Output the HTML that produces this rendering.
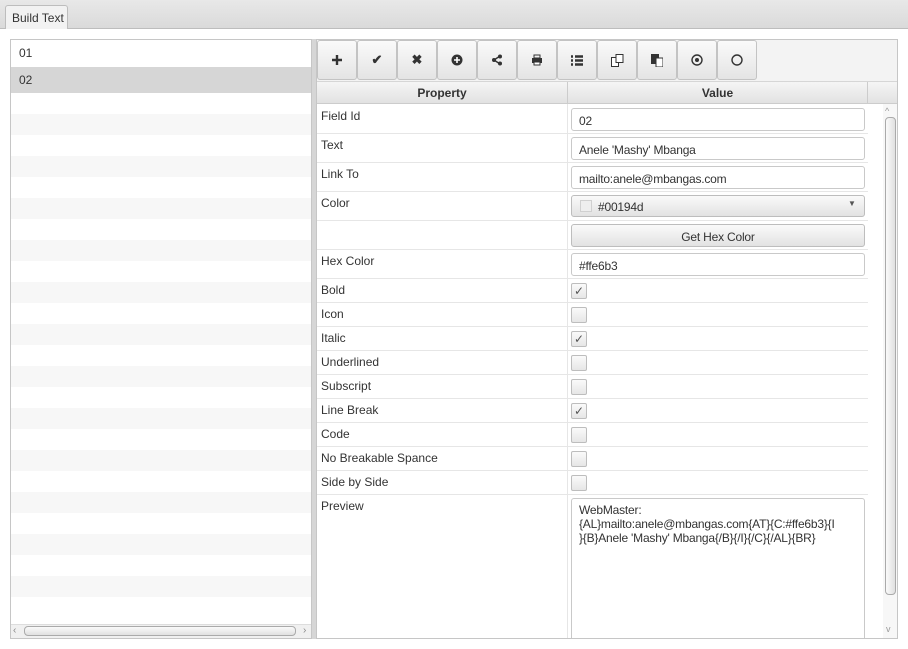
<!DOCTYPE html>
<html><head><style>
*{box-sizing:border-box;margin:0;padding:0}
body{width:908px;height:649px;background:#fff;font-family:"Liberation Sans",sans-serif;font-size:12px;color:#333;position:relative;overflow:hidden}
.a{position:absolute}
.tabbar{left:0;top:0;width:908px;height:29px;background:linear-gradient(#e8e8e8,#dadada);border-bottom:1px solid #bdbdbd}
.tab{left:5px;top:5px;width:63px;height:24px;background:#f2f2f2;border:1px solid #bdbdbd;border-bottom:none;border-radius:3px 3px 0 0;padding:5px 0 0 6px;color:#333}
.left{left:10px;top:39px;width:302px;height:600px;border:1px solid #c6c6c6;overflow:hidden}
.row{position:absolute;left:0;width:300px;padding-left:8px}
.split{left:312px;top:39px;width:4px;height:600px;background:#d6d6d6}
.right{left:316px;top:39px;width:582px;height:600px;border:1px solid #c6c6c6;background:#fff;overflow:hidden}
.tb{left:0;top:0;width:580px;height:42px;background:#f3f3f3;border-bottom:1px solid #d6d6d6}
.btn{position:absolute;top:0;width:40px;height:40px;background:linear-gradient(#fafafa,#e4e4e4);border:1px solid #c3c3c3;border-radius:3px;display:flex;align-items:center;justify-content:center;font-weight:bold;font-size:13px;color:#333}
.hd{top:42px;height:22px;background:linear-gradient(#f5f5f5,#e2e2e2);border-right:1px solid #ccc;border-bottom:1px solid #ccc;font-weight:bold;text-align:center;line-height:22px;color:#333}
.pr{position:absolute;left:0;width:551px;border-bottom:1px solid #e6e6e6}
.pr .k{position:absolute;left:4px;top:4px}
.col{left:250px;top:64px;width:1px;height:540px;background:#e6e6e6}
.inp{position:absolute;left:254px;width:294px;height:23px;border:1px solid #c9c9c9;border-radius:3px;background:#fff;padding:5px 0 0 7px;color:#333;letter-spacing:-0.2px}
.gb{background:linear-gradient(#fafafa,#e2e2e2);border-color:#bdbdbd}
.cb{position:absolute;left:254px;width:16px;height:16px;border:1px solid #bdbdbd;border-radius:2px;background:linear-gradient(#fafafa,#e6e6e6);font-size:12px;line-height:14px;text-align:center;color:#555}
</style></head><body>
<div class="a tabbar"></div>
<div class="a tab">Build Text</div>

<div class="a left">
<div class="row" style="top:0;height:27px;line-height:27px;background:#fff">01</div>
<div class="row" style="top:27px;height:26px;line-height:26px;background:#d6d6d6">02</div>
<div class="row" style="top:74px;height:21px;background:#f7f7f7"></div>
<div class="row" style="top:116px;height:21px;background:#f7f7f7"></div>
<div class="row" style="top:158px;height:21px;background:#f7f7f7"></div>
<div class="row" style="top:200px;height:21px;background:#f7f7f7"></div>
<div class="row" style="top:242px;height:21px;background:#f7f7f7"></div>
<div class="row" style="top:284px;height:21px;background:#f7f7f7"></div>
<div class="row" style="top:326px;height:21px;background:#f7f7f7"></div>
<div class="row" style="top:368px;height:21px;background:#f7f7f7"></div>
<div class="row" style="top:410px;height:21px;background:#f7f7f7"></div>
<div class="row" style="top:452px;height:21px;background:#f7f7f7"></div>
<div class="row" style="top:494px;height:21px;background:#f7f7f7"></div>
<div class="row" style="top:536px;height:21px;background:#f7f7f7"></div>
<div class="a" style="left:0;top:584px;width:300px;height:14px;background:#f0f0f0;border-top:1px solid #ddd"></div>
<div class="a" style="left:2px;top:585px;font-size:10px;color:#888">&lsaquo;</div>
<div class="a" style="left:292px;top:585px;font-size:10px;color:#888">&rsaquo;</div>
<div class="a" style="left:13px;top:586px;width:272px;height:10px;border:1px solid #aaa;border-radius:4px;background:linear-gradient(#fafafa,#e0e0e0)"></div>
</div>
<div class="a split"></div>

<div class="a right">
<div class="a tb">
<div class="btn" style="left:0"><svg width="12" height="12"><path d="M6 1v10M1 6h10" stroke="#333" stroke-width="2.4"/></svg></div>
<div class="btn" style="left:40px">✔</div>
<div class="btn" style="left:80px">✖</div>
<div class="btn" style="left:120px"><svg width="12" height="12"><circle cx="6" cy="6" r="5.5" fill="#333"/><path d="M6 3v6M3 6h6" stroke="#fff" stroke-width="1.6"/></svg></div>
<div class="btn" style="left:160px"><svg width="12" height="12"><path d="M9 2L3 6L9 10" stroke="#333" stroke-width="1.4" fill="none"/><circle cx="9" cy="2.5" r="2" fill="#333"/><circle cx="3" cy="6" r="2" fill="#333"/><circle cx="9" cy="9.5" r="2" fill="#333"/></svg></div>
<div class="btn" style="left:200px"><svg width="12" height="12"><rect x="3" y="1" width="6" height="3" fill="none" stroke="#333"/><rect x="1" y="4" width="10" height="5" fill="#333"/><rect x="3" y="8" width="6" height="3" fill="#fff" stroke="#333"/></svg></div>
<div class="btn" style="left:240px"><svg width="12" height="11"><path d="M0 1.5h2M4 1.5h8M0 5.5h2M4 5.5h8M0 9.5h2M4 9.5h8" stroke="#333" stroke-width="2.4"/></svg></div>
<div class="btn" style="left:280px"><svg width="13" height="13"><rect x="0.5" y="3.5" width="7" height="9" fill="#fff" stroke="#333"/><rect x="5" y="0.5" width="7" height="8" fill="#fff" stroke="#333"/></svg></div>
<div class="btn" style="left:320px"><svg width="12" height="13"><rect x="0" y="0" width="8" height="10" fill="#333"/><rect x="5" y="4" width="7" height="9" fill="#fff" stroke="#333"/></svg></div>
<div class="btn" style="left:360px"><svg width="12" height="12"><circle cx="6" cy="6" r="5" fill="none" stroke="#333" stroke-width="1.4"/><circle cx="6" cy="6" r="2" fill="#333"/></svg></div>
<div class="btn" style="left:400px"><svg width="12" height="12"><circle cx="6" cy="6" r="5" fill="none" stroke="#333" stroke-width="1.4"/></svg></div>
</div>
<div class="a hd" style="left:0;width:251px">Property</div>
<div class="a hd" style="left:251px;width:300px">Value</div>
<div class="a hd" style="left:551px;width:29px;border-right:none"></div>
<div class="a col"></div>

<div class="pr" style="top:65px;height:29px"><span class="k">Field Id</span></div>
<div class="inp" style="top:68px">02</div>
<div class="pr" style="top:94px;height:29px"><span class="k">Text</span></div>
<div class="inp" style="top:97px">Anele 'Mashy' Mbanga</div>
<div class="pr" style="top:123px;height:29px"><span class="k">Link To</span></div>
<div class="inp" style="top:126px">mailto:anele@mbangas.com</div>
<div class="pr" style="top:152px;height:29px"><span class="k">Color</span></div>
<div class="inp gb" style="top:155px;height:22px;padding:4px 0 0 26px">#00194d<span class="a" style="left:8px;top:4px;width:12px;height:12px;border:1px solid #d0d0d0;background:#eee"></span><span class="a" style="left:276px;top:3px;font-size:8px;color:#555">▼</span></div>
<div class="pr" style="top:181px;height:29px"></div>
<div class="inp gb" style="top:184px;text-align:center;padding:5px 0 0 0">Get Hex Color</div>
<div class="pr" style="top:210px;height:29px"><span class="k">Hex Color</span></div>
<div class="inp" style="top:213px">#ffe6b3</div>

<div class="pr" style="top:239px;height:24px"><span class="k">Bold</span></div><div class="cb" style="top:243px">✓</div>
<div class="pr" style="top:263px;height:24px"><span class="k">Icon</span></div><div class="cb" style="top:267px"></div>
<div class="pr" style="top:287px;height:24px"><span class="k">Italic</span></div><div class="cb" style="top:291px">✓</div>
<div class="pr" style="top:311px;height:24px"><span class="k">Underlined</span></div><div class="cb" style="top:315px"></div>
<div class="pr" style="top:335px;height:24px"><span class="k">Subscript</span></div><div class="cb" style="top:339px"></div>
<div class="pr" style="top:359px;height:24px"><span class="k">Line Break</span></div><div class="cb" style="top:363px">✓</div>
<div class="pr" style="top:383px;height:24px"><span class="k">Code</span></div><div class="cb" style="top:387px"></div>
<div class="pr" style="top:407px;height:24px"><span class="k">No Breakable Spance</span></div><div class="cb" style="top:411px"></div>
<div class="pr" style="top:431px;height:24px"><span class="k">Side by Side</span></div><div class="cb" style="top:435px"></div>
<div class="pr" style="top:455px;height:150px;border:none"><span class="k">Preview</span></div>
<div class="inp" style="top:458px;height:150px;line-height:14px;padding:4px 4px 0 7px">WebMaster:<br>{AL}mailto:anele@mbangas.com{AT}{C:#ffe6b3}{I<br>}{B}Anele 'Mashy' Mbanga{/B}{/I}{/C}{/AL}{BR}</div>

<div class="a" style="left:566px;top:64px;width:14px;height:536px;background:#f7f7f7"></div>
<div class="a" style="left:568px;top:66px;font-size:9px;color:#999">^</div>
<div class="a" style="left:568px;top:77px;width:11px;height:478px;border:1px solid #aaa;border-radius:4px;background:linear-gradient(90deg,#fafafa,#e0e0e0)"></div>
<div class="a" style="left:569px;top:584px;font-size:9px;color:#999">v</div>
</div>
</body></html>
